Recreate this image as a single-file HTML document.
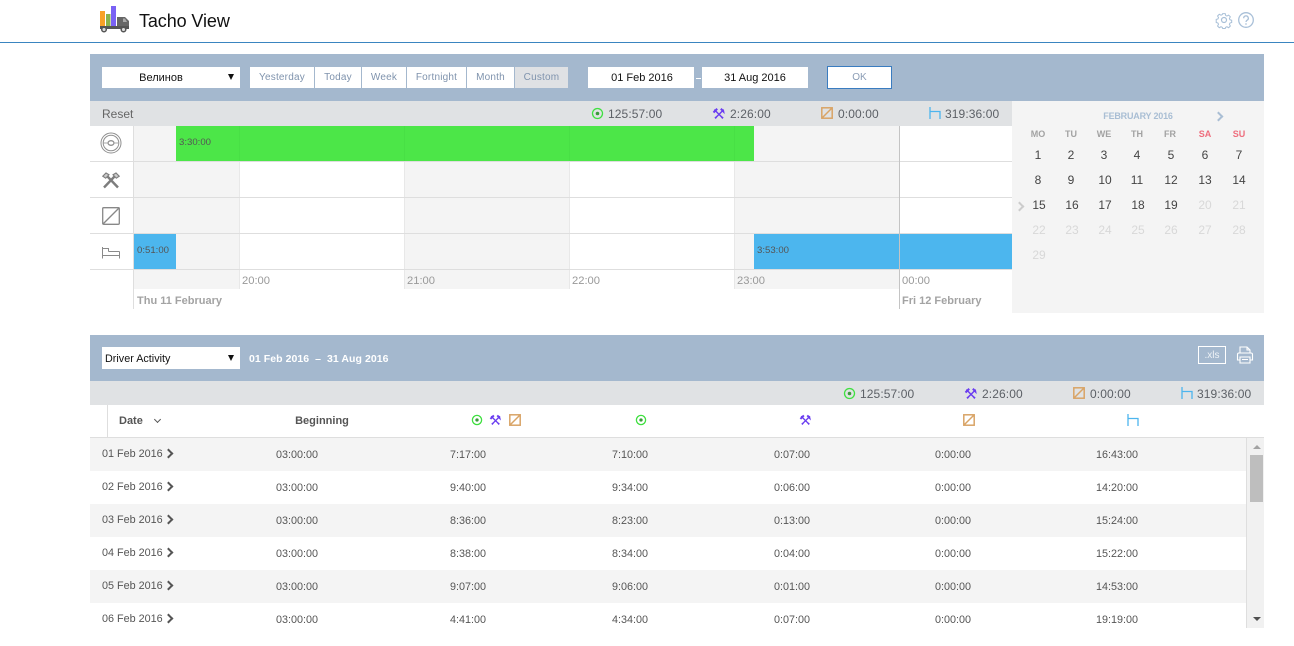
<!DOCTYPE html>
<html><head><meta charset="utf-8"><title>Tacho View</title>
<style>
html,body{margin:0;padding:0;background:#fff;width:1294px;height:646px;overflow:hidden}
body{position:relative;font-family:"Liberation Sans","Noto Sans CJK SC",sans-serif;color:#555}
div,span,svg{position:absolute}
.t{white-space:nowrap;line-height:16px;height:16px}
.c{width:100px;text-align:center}
.b{top:67px;height:21px;background:#fff;color:#7f93ad;font-size:10px;line-height:21px;text-align:center;letter-spacing:.2px}
.tri{width:0;height:0;border-left:3.5px solid transparent;border-right:3.5px solid transparent;border-top:6px solid #111}
.g{background:#f4f4f4}
.h{background:#dedede;height:1px;left:90px;width:922px}
.tm{font-size:9.600px;color:#555}
.l{font-size:11.200px;color:#999}
.d{font-size:11px;font-weight:bold;color:#a3a3a3}
.s{font-size:12px;color:#5c6066;letter-spacing:.1px}
.m{font-size:9px;font-weight:bold;color:#a2a2a2}
.n{font-size:12px;color:#444}
.o{font-size:12px;color:#d8d8d8}
.k{font-size:10.800px;color:#555}
.r{left:90px;width:1156px;height:33px}
.chev{width:5px;height:5px;border-top:2px solid #555;border-right:2px solid #555;transform:rotate(45deg)}
.ham{font-family:"DejaVu Sans",sans-serif;color:#6a3cf0;font-weight:bold;font-size:15px;line-height:16px;height:16px;white-space:nowrap}
.v{width:1px;top:126px;height:163px;background:#e8e8e8}
.vg{width:1px;top:126px;height:35px;background:#48e045}
</style></head><body>

<!-- header -->
<svg style="left:99px;top:5px" width="32" height="28" viewBox="0 0 32 28">
<rect x="1" y="6" width="5" height="15" fill="#f9a126"/><rect x="7" y="9" width="4.500" height="12" fill="#8bb24a"/><rect x="12" y="1" width="5" height="20" fill="#7a62f4"/>
<path d="M18 12h8l4 4v6H18z" fill="#666"/><path d="M24 13.500h2l2 3.500h-4z" fill="#aaa"/><rect x="1" y="21" width="29" height="3" fill="#555"/>
<circle cx="5" cy="24.500" r="2.300" fill="#ddd" stroke="#555" stroke-width="1.500"/><circle cx="24.500" cy="24.500" r="2.300" fill="#ddd" stroke="#555" stroke-width="1.500"/>
</svg>
<div class="t" style="left:139px;top:10px;height:22px;line-height:22px;font-size:18px;color:#111;letter-spacing:-.1px">Tacho View</div>
<svg style="left:1215px;top:11px" width="18" height="18" viewBox="0 0 18 18" fill="none" stroke="#a9c0d8" stroke-width="1.200"><circle cx="9" cy="9" r="2.500"/><path d="M7.500 1.500h3l.5 2.200 1.500.7 2-1.100 2 2-1.100 2 .7 1.500 2 .6v2.600l-2 .6-.7 1.500 1.100 2-2 2-2-1.100-1.500.7-.5 1.300h-3l-.5-1.300-1.500-.7-2 1.100-2-2 1.100-2-.7-1.500-2-.6V8.400l2-.6.7-1.500-1.100-2 2-2 2 1.100 1.500-.7z" transform="translate(1.300 1.300) scale(.85)"/></svg>
<svg style="left:1237px;top:11px" width="18" height="18" viewBox="0 0 18 18" fill="none" stroke="#a9c0d8" stroke-width="1.300"><circle cx="9" cy="9" r="7.300"/><path d="M6.700 7.200a2.300 2.300 0 1 1 3.400 2c-.8.500-1.100.9-1.100 1.800M9 12.300v1.400"/></svg>
<div style="left:0;top:42px;width:1294px;height:1px;background:#3a85c0"></div>

<!-- top band -->
<div style="left:90px;top:54px;width:1174px;height:47px;background:#a4b8ce"></div>
<div style="left:102px;top:67px;width:138px;height:21px;background:#fff"></div>
<div class="t c" style="left:111px;top:70px;font-size:11px;color:#111">Велинов</div>
<div class="tri" style="left:228px;top:74px"></div>
<div class="b" style="left:250px;width:64px">Yesterday</div>
<div class="b" style="left:315px;width:46px">Today</div>
<div class="b" style="left:362px;width:44px">Week</div>
<div class="b" style="left:407px;width:59px">Fortnight</div>
<div class="b" style="left:467px;width:47px">Month</div>
<div class="b" style="left:515px;width:53px;background:#dfe1e4">Custom</div>
<div style="left:588px;top:67px;width:106px;height:21px;background:#fff"></div>
<div class="t c" style="left:592px;top:70px;font-size:11px;color:#111">01 Feb 2016</div>
<div style="left:696px;top:78px;width:5px;height:1px;background:#fff"></div>
<div style="left:702px;top:67px;width:106px;height:21px;background:#fff"></div>
<div class="t c" style="left:705px;top:70px;font-size:11px;color:#111">31 Aug 2016</div>
<div style="left:827px;top:66px;width:63px;height:21px;background:#fff;border:1px solid #3a7cc0;font-size:10px;line-height:22px;text-align:center;color:#8a9cb5">OK</div>

<!-- reset bar -->
<div style="left:90px;top:101px;width:922px;height:25px;background:#e0e2e4"></div>
<div class="t" style="left:102px;top:106px;font-size:12px;color:#666">Reset</div>
<svg style="left:591px;top:107px" width="13" height="13" viewBox="0 0 13 13"><circle cx="6.500" cy="6.500" r="5" fill="none" stroke="#3fe040" stroke-width="1.300"/><circle cx="6.500" cy="6.500" r="1.800" fill="#3a9a3a"/></svg>
<div class="t s" style="left:608px;top:106px">125:57:00</div>
<div class="ham" style="left:712px;top:106px">⚒</div>
<div class="t s" style="left:730px;top:106px">2:26:00</div>
<svg style="left:821px;top:107px" width="12" height="12" viewBox="0 0 12 12" fill="none" stroke="#d9a466" stroke-width="1.500"><rect x=".8" y=".8" width="10.400" height="10.400"/><path d="M1 11 11 1"/></svg>
<div class="t s" style="left:838px;top:106px">0:00:00</div>
<svg style="left:929px;top:107px" width="12" height="13" viewBox="0 0 12 13" fill="none" stroke="#4db5ee" stroke-width="1.300"><path d="M1 0v12M1 4.500h10V12"/></svg>
<div class="t s" style="left:945px;top:106px">319:36:00</div>

<!-- timeline -->
<div class="g" style="left:134px;top:126px;width:105px;height:163px"></div>
<div class="g" style="left:405px;top:126px;width:164px;height:163px"></div>
<div class="g" style="left:735px;top:126px;width:164px;height:163px"></div>
<div class="v" style="left:239px"></div>
<div class="v" style="left:404px"></div>
<div class="v" style="left:569px"></div>
<div class="v" style="left:734px"></div>
<div style="left:133px;top:126px;width:1px;height:183px;background:#dedede"></div>
<div class="h" style="top:161px"></div>
<div class="h" style="top:197px"></div>
<div class="h" style="top:233px"></div>
<div class="h" style="top:269px"></div>
<div style="left:176px;top:126px;width:578px;height:35px;background:#4ce648"></div>
<div class="vg" style="left:239px"></div>
<div class="vg" style="left:404px"></div>
<div class="vg" style="left:569px"></div>
<div class="vg" style="left:734px"></div>
<div style="left:134px;top:234px;width:42px;height:35px;background:#4cb6ee"></div>
<div style="left:754px;top:234px;width:258px;height:35px;background:#4cb6ee"></div>
<div style="left:899px;top:126px;width:1px;height:183px;background:#c4c4c4"></div>
<div class="t tm" style="left:179px;top:135px">3:30:00</div>
<div class="t tm" style="left:137px;top:243px">0:51:00</div>
<div class="t tm" style="left:757px;top:243px">3:53:00</div>
<div class="t l" style="left:242px;top:273px">20:00</div>
<div class="t l" style="left:407px;top:273px">21:00</div>
<div class="t l" style="left:572px;top:273px">22:00</div>
<div class="t l" style="left:737px;top:273px">23:00</div>
<div class="t l" style="left:902px;top:273px">00:00</div>
<div class="t d" style="left:137px;top:293px">Thu 11 February</div>
<div class="t d" style="left:902px;top:293px">Fri 12 February</div>

<!-- row icons -->
<svg style="left:100px;top:132px" width="22" height="22" viewBox="0 0 22 22" fill="none" stroke="#8f8f8f"><circle cx="11" cy="11" r="10"/><circle cx="11" cy="11" r="7.800"/><ellipse cx="11" cy="11" rx="3" ry="2.300" stroke-width="1.300"/><path d="M3.500 11h4.500M14 11h4.500" stroke="#aaa"/></svg>
<svg style="left:102px;top:172px" width="18" height="17" viewBox="0 0 18 17" fill="none" stroke="#7d7d7d"><path d="M2 15.500 12.500 4.500M16 15.500 5.500 4.500" stroke-width="2.400"/><path d="M.8 4.200 4 1l3 1.800-3.300 3.400zM17.200 4.200 14 1l-3 1.800 3.300 3.400z" stroke-width="1.100" fill="#ccc"/></svg>
<svg style="left:102px;top:207px" width="18" height="18" viewBox="0 0 18 18" fill="none" stroke="#888" stroke-width="1.300"><rect x=".7" y=".7" width="16.600" height="16.600" rx="1"/><path d="M1 17 17 1"/></svg>
<svg style="left:102px;top:247px" width="18" height="12" viewBox="0 0 18 12" fill="none" stroke="#8a8a8a"><path d="M.5 0v11.500M.5 1.500h6v3M6.500 4.500h11M.5 8.500h17M17.500 4.500v7"/></svg>

<!-- calendar -->
<div class="g" style="left:1012px;top:101px;width:252px;height:212px"></div>
<div class="t c" style="left:1088px;top:108px;font-size:9px;font-weight:bold;color:#a9bed4;letter-spacing:-.2px">FEBRUARY 2016</div>
<div style="left:1215px;top:113px;width:5px;height:5px;border-top:2px solid #a9bed4;border-right:2px solid #a9bed4;transform:rotate(45deg)"></div>
<div style="left:1016px;top:203px;width:5px;height:5px;border-top:2px solid #ccc;border-right:2px solid #ccc;transform:rotate(45deg)"></div>
<div class="t c m" style="left:988px;top:126px">MO</div><div class="t c m" style="left:1021px;top:126px">TU</div><div class="t c m" style="left:1054px;top:126px">WE</div><div class="t c m" style="left:1087px;top:126px">TH</div><div class="t c m" style="left:1120px;top:126px">FR</div><div class="t c m" style="left:1155px;top:126px;color:#ee6d7d">SA</div><div class="t c m" style="left:1189px;top:126px;color:#ee6d7d">SU</div>
<div class="t c n" style="left:988px;top:147px">1</div><div class="t c n" style="left:1021px;top:147px">2</div><div class="t c n" style="left:1054px;top:147px">3</div><div class="t c n" style="left:1087px;top:147px">4</div><div class="t c n" style="left:1121px;top:147px">5</div><div class="t c n" style="left:1155px;top:147px">6</div><div class="t c n" style="left:1189px;top:147px">7</div>
<div class="t c n" style="left:988px;top:172px">8</div><div class="t c n" style="left:1021px;top:172px">9</div><div class="t c n" style="left:1055px;top:172px">10</div><div class="t c n" style="left:1087px;top:172px">11</div><div class="t c n" style="left:1121px;top:172px">12</div><div class="t c n" style="left:1155px;top:172px">13</div><div class="t c n" style="left:1189px;top:172px">14</div>
<div class="t c n" style="left:989px;top:197px">15</div><div class="t c n" style="left:1022px;top:197px">16</div><div class="t c n" style="left:1055px;top:197px">17</div><div class="t c n" style="left:1088px;top:197px">18</div><div class="t c n" style="left:1121px;top:197px">19</div><div class="t c o" style="left:1155px;top:197px">20</div><div class="t c o" style="left:1189px;top:197px">21</div>
<div class="t c o" style="left:989px;top:222px">22</div><div class="t c o" style="left:1022px;top:222px">23</div><div class="t c o" style="left:1055px;top:222px">24</div><div class="t c o" style="left:1088px;top:222px">25</div><div class="t c o" style="left:1121px;top:222px">26</div><div class="t c o" style="left:1155px;top:222px">27</div><div class="t c o" style="left:1189px;top:222px">28</div>
<div class="t c o" style="left:989px;top:247px">29</div>

<!-- second band -->
<div style="left:90px;top:335px;width:1174px;height:46px;background:#a4b8ce"></div>
<div style="left:102px;top:347px;width:138px;height:22px;background:#fff"></div>
<div class="t" style="left:105px;top:351px;font-size:10.800px;color:#111">Driver Activity</div>
<div class="tri" style="left:228px;top:355px"></div>
<div class="t" style="left:249px;top:351px;font-size:10.500px;font-weight:bold;color:#fff;letter-spacing:.06px;white-space:pre">01 Feb 2016  –  31 Aug 2016</div>
<div style="left:1198px;top:346px;width:26px;height:16px;border:1px solid #fff;font-size:10px;line-height:17px;text-align:center;color:#eef2f6">.xls</div>
<svg style="left:1236px;top:346px" width="18" height="18" viewBox="0 0 18 18" fill="none" stroke="#fff" stroke-width="1.100"><path d="M4 7V1h7l3 3v3M11 1v3h3"/><path d="M4 14H1.500V8.500q0-1.500 1.500-1.500h12q1.500 0 1.500 1.500V14H14"/><path d="M4 11h10v6H4zM6 13.500h6"/></svg>

<!-- second summary -->
<div style="left:90px;top:381px;width:1174px;height:24px;background:#e0e2e4"></div>
<svg style="left:843px;top:387px" width="13" height="13" viewBox="0 0 13 13"><circle cx="6.500" cy="6.500" r="5" fill="none" stroke="#3fe040" stroke-width="1.300"/><circle cx="6.500" cy="6.500" r="1.800" fill="#3a9a3a"/></svg>
<div class="t s" style="left:860px;top:386px">125:57:00</div>
<div class="ham" style="left:964px;top:386px">⚒</div>
<div class="t s" style="left:982px;top:386px">2:26:00</div>
<svg style="left:1073px;top:387px" width="12" height="12" viewBox="0 0 12 12" fill="none" stroke="#d9a466" stroke-width="1.500"><rect x=".8" y=".8" width="10.400" height="10.400"/><path d="M1 11 11 1"/></svg>
<div class="t s" style="left:1090px;top:386px">0:00:00</div>
<svg style="left:1181px;top:387px" width="12" height="13" viewBox="0 0 12 13" fill="none" stroke="#4db5ee" stroke-width="1.300"><path d="M1 0v12M1 4.500h10V12"/></svg>
<div class="t s" style="left:1197px;top:386px">319:36:00</div>

<!-- table header -->
<div style="left:107px;top:405px;width:1px;height:32px;background:#dedede"></div>
<div style="left:90px;top:437px;width:1174px;height:1px;background:#dedede"></div>
<div class="t" style="left:119px;top:413px;font-size:11px;font-weight:bold;color:#555">Date</div>
<div style="left:155px;top:417px;width:4px;height:4px;border-right:1.500px solid #555;border-bottom:1.500px solid #555;transform:rotate(45deg)"></div>
<div class="t c" style="left:272px;top:413px;font-size:11px;font-weight:bold;color:#555">Beginning</div>
<svg style="left:471px;top:414px" width="12" height="12" viewBox="0 0 13 13"><circle cx="6.500" cy="6.500" r="5" fill="none" stroke="#3fe040" stroke-width="1.400"/><circle cx="6.500" cy="6.500" r="1.800" fill="#3a9a3a"/></svg>
<div class="ham" style="left:489px;top:413px;font-size:14px">⚒</div>
<svg style="left:509px;top:414px" width="12" height="12" viewBox="0 0 12 12" fill="none" stroke="#d9a466" stroke-width="1.500"><rect x=".8" y=".8" width="10.400" height="10.400"/><path d="M1 11 11 1"/></svg>
<svg style="left:635px;top:414px" width="12" height="12" viewBox="0 0 13 13"><circle cx="6.500" cy="6.500" r="5" fill="none" stroke="#3fe040" stroke-width="1.400"/><circle cx="6.500" cy="6.500" r="1.800" fill="#3a9a3a"/></svg>
<div class="ham" style="left:799px;top:413px;font-size:14px">⚒</div>
<svg style="left:963px;top:414px" width="12" height="12" viewBox="0 0 12 12" fill="none" stroke="#d9a466" stroke-width="1.500"><rect x=".8" y=".8" width="10.400" height="10.400"/><path d="M1 11 11 1"/></svg>
<svg style="left:1127px;top:414px" width="12" height="13" viewBox="0 0 12 13" fill="none" stroke="#4db5ee" stroke-width="1.300"><path d="M1 0v12M1 4.500h10V12"/></svg>

<!-- rows -->
<div class="r g" style="top:438px"></div>
<div class="r g" style="top:504px"></div>
<div class="r g" style="top:570px"></div>

<div class="t k" style="left:102px;top:446px">01 Feb 2016</div><div class="chev" style="left:165px;top:450px"></div>
<div class="t c k" style="left:247px;top:447px">03:00:00</div><div class="t c k" style="left:418px;top:447px">7:17:00</div><div class="t c k" style="left:580px;top:447px">7:10:00</div><div class="t c k" style="left:742px;top:447px">0:07:00</div><div class="t c k" style="left:903px;top:447px">0:00:00</div><div class="t c k" style="left:1067px;top:447px">16:43:00</div>

<div class="t k" style="left:102px;top:479px">02 Feb 2016</div><div class="chev" style="left:165px;top:483px"></div>
<div class="t c k" style="left:247px;top:480px">03:00:00</div><div class="t c k" style="left:418px;top:480px">9:40:00</div><div class="t c k" style="left:580px;top:480px">9:34:00</div><div class="t c k" style="left:742px;top:480px">0:06:00</div><div class="t c k" style="left:903px;top:480px">0:00:00</div><div class="t c k" style="left:1067px;top:480px">14:20:00</div>

<div class="t k" style="left:102px;top:512px">03 Feb 2016</div><div class="chev" style="left:165px;top:516px"></div>
<div class="t c k" style="left:247px;top:513px">03:00:00</div><div class="t c k" style="left:418px;top:513px">8:36:00</div><div class="t c k" style="left:580px;top:513px">8:23:00</div><div class="t c k" style="left:742px;top:513px">0:13:00</div><div class="t c k" style="left:903px;top:513px">0:00:00</div><div class="t c k" style="left:1067px;top:513px">15:24:00</div>

<div class="t k" style="left:102px;top:545px">04 Feb 2016</div><div class="chev" style="left:165px;top:549px"></div>
<div class="t c k" style="left:247px;top:546px">03:00:00</div><div class="t c k" style="left:418px;top:546px">8:38:00</div><div class="t c k" style="left:580px;top:546px">8:34:00</div><div class="t c k" style="left:742px;top:546px">0:04:00</div><div class="t c k" style="left:903px;top:546px">0:00:00</div><div class="t c k" style="left:1067px;top:546px">15:22:00</div>

<div class="t k" style="left:102px;top:578px">05 Feb 2016</div><div class="chev" style="left:165px;top:582px"></div>
<div class="t c k" style="left:247px;top:579px">03:00:00</div><div class="t c k" style="left:418px;top:579px">9:07:00</div><div class="t c k" style="left:580px;top:579px">9:06:00</div><div class="t c k" style="left:742px;top:579px">0:01:00</div><div class="t c k" style="left:903px;top:579px">0:00:00</div><div class="t c k" style="left:1067px;top:579px">14:53:00</div>

<div class="t k" style="left:102px;top:611px">06 Feb 2016</div><div class="chev" style="left:165px;top:615px"></div>
<div class="t c k" style="left:247px;top:612px">03:00:00</div><div class="t c k" style="left:418px;top:612px">4:41:00</div><div class="t c k" style="left:580px;top:612px">4:34:00</div><div class="t c k" style="left:742px;top:612px">0:07:00</div><div class="t c k" style="left:903px;top:612px">0:00:00</div><div class="t c k" style="left:1067px;top:612px">19:19:00</div>

<!-- scrollbar -->
<div style="left:1246px;top:438px;width:1px;height:190px;background:#dedede"></div>
<div style="left:1247px;top:438px;width:17px;height:190px;background:#f1f1f1"></div>
<div style="left:1250px;top:455px;width:13px;height:47px;background:#bebebe"></div>
<div style="left:1253px;top:445px;width:0;height:0;border-left:4px solid transparent;border-right:4px solid transparent;border-bottom:4px solid #a3a3a3"></div>
<div style="left:1253px;top:617px;width:0;height:0;border-left:4px solid transparent;border-right:4px solid transparent;border-top:4px solid #505050"></div>
</body></html>
